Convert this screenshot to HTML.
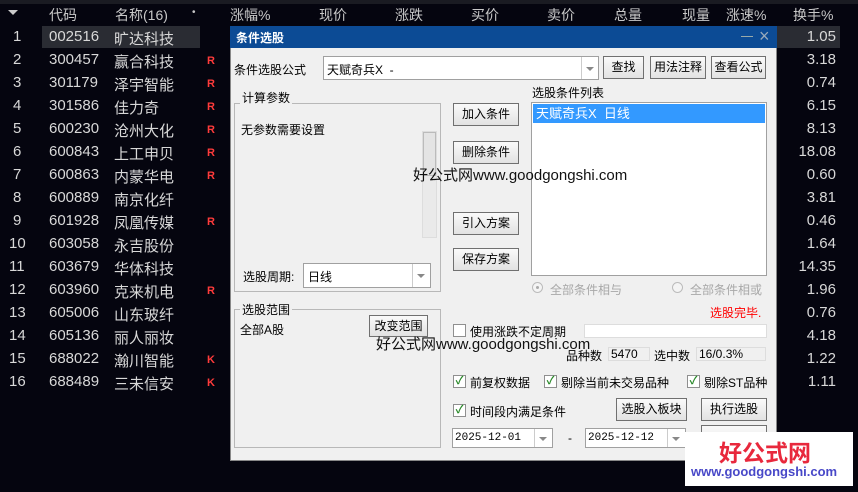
<!DOCTYPE html><html><head><meta charset="utf-8"><style>
*{margin:0;padding:0;box-sizing:border-box}
body{width:858px;height:492px;background:#05050f;position:relative;overflow:hidden;font-family:"Liberation Sans","Noto Sans CJK SC",sans-serif;}
.a{position:absolute;white-space:nowrap}
.h{color:#c8c8c8;font-size:14px;top:5px}
.r{color:#d8d8d8;font-size:15px}
.R{color:#ff3b3b;font-size:11px;font-weight:bold}
.d{font-size:12px;color:#000}
.btn{position:absolute;background:linear-gradient(#fafafa,#e2e2e2);border:1px solid #707070;font-size:12px;text-align:center;color:#000}
.box{position:absolute;background:#fff;border:1px solid #a0a0a0}
.cb{position:absolute;width:13px;height:13px;border:1px solid #8f8f8f;background:#fff;color:#2a8a2a;font-size:11px;line-height:11px;text-align:center;font-weight:bold}
.arr{position:absolute;width:0;height:0;border-left:4px solid transparent;border-right:4px solid transparent;border-top:4px solid #888}
</style></head><body>
<div class="a" style="left:0;top:0;width:858px;height:4px;background:#1a1b22"></div>
<div class="a" style="left:8px;top:10px;width:0;height:0;border-left:5px solid transparent;border-right:5px solid transparent;border-top:5px solid #ccc"></div>
<div class="a h" style="left:49px">代码</div>
<div class="a h" style="left:115px">名称(16)</div>
<div class="a h" style="left:192px;font-size:10px;top:7px">•</div>
<div class="a h" style="left:230px">涨幅%</div>
<div class="a h" style="left:319px">现价</div>
<div class="a h" style="left:395px">涨跌</div>
<div class="a h" style="left:471px">买价</div>
<div class="a h" style="left:547px">卖价</div>
<div class="a h" style="left:614px">总量</div>
<div class="a h" style="left:682px">现量</div>
<div class="a h" style="left:726px">涨速%</div>
<div class="a h" style="left:793px">换手%</div>
<div class="a" style="left:42px;top:26px;width:158px;height:22px;background:#2a2c33"></div>
<div class="a" style="left:776px;top:26px;width:64px;height:22px;background:#2a2c33"></div>
<div id="rows"></div>
<script>
var d=[["002516","旷达科技","","1.05"],["300457","赢合科技","R","3.18"],["301179","泽宇智能","R","0.74"],["301586","佳力奇","R","6.15"],["600230","沧州大化","R","8.13"],["600843","上工申贝","R","18.08"],["600863","内蒙华电","R","0.60"],["600889","南京化纤","","3.81"],["601928","凤凰传媒","R","0.46"],["603058","永吉股份","","1.64"],["603679","华体科技","","14.35"],["603960","克来机电","R","1.96"],["605006","山东玻纤","","0.76"],["605136","丽人丽妆","","4.18"],["688022","瀚川智能","K","1.22"],["688489","三未信安","K","1.11"]];
var h="";d.forEach(function(r,i){var t=28+i*23;h+='<div class="a r" style="left:'+(i<9?13:9)+'px;top:'+t+'px">'+(i+1)+'</div><div class="a r" style="left:49px;top:'+t+'px">'+r[0]+'</div><div class="a r" style="left:114px;top:'+t+'px">'+r[1]+'</div><div class="a R" style="left:207px;top:'+(t+4)+'px">'+r[2]+'</div><div class="a r" style="right:22px;top:'+t+'px">'+r[3]+'</div>';});
document.getElementById("rows").innerHTML=h;
</script>
<!-- dialog -->
<div class="a" style="left:230px;top:26px;width:547px;height:435px;background:#f0f0f0;border:1px solid #888"></div>
<div class="a" style="left:230px;top:26px;width:547px;height:22px;background:#0c4b95"></div>
<div class="a" style="left:236px;top:29px;color:#fff;font-size:12px;font-weight:bold">条件选股</div>
<div class="a" style="left:741px;top:36px;width:12px;height:1px;background:#9aa"></div>
<div class="a" style="left:759px;top:26px;color:#9ab;font-size:18px;line-height:20px">×</div>
<div class="a d" style="left:234px;top:61px">条件选股公式</div>
<div class="box" style="left:323px;top:56px;width:276px;height:24px"></div>
<div class="a d" style="left:327px;top:61px">天赋奇兵X&nbsp; -</div>
<div class="a" style="left:581px;top:57px;width:1px;height:22px;background:#ccc"></div><div class="arr" style="left:586px;top:67px"></div>
<div class="btn" style="left:603px;top:56px;width:41px;height:23px;line-height:21px">查找</div>
<div class="btn" style="left:650px;top:56px;width:56px;height:23px;line-height:21px">用法注释</div>
<div class="btn" style="left:711px;top:56px;width:55px;height:23px;line-height:21px">查看公式</div>
<div class="a" style="left:234px;top:103px;width:207px;height:189px;border:1px solid #b8b8b8"></div>
<div class="a d" style="left:240px;top:89px;background:#f0f0f0;padding:0 2px">计算参数</div>
<div class="a d" style="left:241px;top:121px">无参数需要设置</div>
<div class="a" style="left:422px;top:131px;width:15px;height:107px;background:#eaeaea;border:1px solid #ddd"></div>
<div class="a" style="left:423px;top:132px;width:13px;height:44px;background:#e4e4e4;border:1px solid #bbb"></div>
<div class="a d" style="left:243px;top:268px">选股周期:</div>
<div class="box" style="left:303px;top:263px;width:128px;height:25px"></div>
<div class="a d" style="left:308px;top:268px">日线</div>
<div class="a" style="left:412px;top:264px;width:1px;height:23px;background:#ccc"></div><div class="arr" style="left:417px;top:274px"></div>
<div class="a" style="left:234px;top:309px;width:207px;height:139px;border:1px solid #b8b8b8"></div>
<div class="a d" style="left:240px;top:301px;background:#f0f0f0;padding:0 2px">选股范围</div>
<div class="a d" style="left:240px;top:321px">全部A股</div>
<div class="btn" style="left:369px;top:315px;width:59px;height:22px;line-height:20px">改变范围</div>
<div class="btn" style="left:453px;top:103px;width:66px;height:23px;line-height:21px">加入条件</div>
<div class="btn" style="left:453px;top:141px;width:66px;height:23px;line-height:21px">删除条件</div>
<div class="btn" style="left:453px;top:212px;width:66px;height:23px;line-height:21px">引入方案</div>
<div class="btn" style="left:453px;top:248px;width:66px;height:23px;line-height:21px">保存方案</div>
<div class="a d" style="left:532px;top:84px">选股条件列表</div>
<div class="box" style="left:531px;top:102px;width:236px;height:174px"></div>
<div class="a" style="left:533px;top:104px;width:232px;height:19px;background:#3399ff;color:#fff;font-size:13px;padding-left:3px;line-height:19px">天赋奇兵X&nbsp; 日线</div>
<div class="a" style="left:532px;top:282px;width:11px;height:11px;border-radius:50%;border:1px solid #bbb;background:#f4f4f4"></div><div class="a" style="left:536px;top:286px;width:3px;height:3px;border-radius:50%;background:#aaa"></div>
<div class="a d" style="left:550px;top:281px;color:#a8a8a8">全部条件相与</div>
<div class="a" style="left:672px;top:282px;width:11px;height:11px;border-radius:50%;border:1px solid #bbb;background:#f4f4f4"></div>
<div class="a d" style="left:690px;top:281px;color:#a8a8a8">全部条件相或</div>
<div class="a d" style="left:710px;top:304px;color:#f00">选股完毕.</div>
<div class="cb" style="left:453px;top:324px"></div>
<div class="a d" style="left:470px;top:323px">使用涨跌不定周期</div>
<div class="a" style="left:584px;top:324px;width:183px;height:14px;background:#fff;border:1px solid #ddd"></div>
<div class="a d" style="left:566px;top:347px">品种数</div>
<div class="a" style="left:608px;top:347px;width:42px;height:14px;border:1px solid #ddd;font-size:12px;padding-left:2px;line-height:13px">5470</div>
<div class="a d" style="left:654px;top:347px">选中数</div>
<div class="a" style="left:696px;top:347px;width:70px;height:14px;border:1px solid #ddd;font-size:12px;padding-left:2px;line-height:13px">16/0.3%</div>
<div class="cb" style="left:453px;top:375px">✓</div><div class="a d" style="left:470px;top:374px">前复权数据</div>
<div class="cb" style="left:544px;top:375px">✓</div><div class="a d" style="left:561px;top:374px">剔除当前未交易品种</div>
<div class="cb" style="left:687px;top:375px">✓</div><div class="a d" style="left:704px;top:374px">剔除ST品种</div>
<div class="cb" style="left:453px;top:404px">✓</div><div class="a d" style="left:470px;top:403px">时间段内满足条件</div>
<div class="btn" style="left:616px;top:398px;width:71px;height:23px;line-height:21px">选股入板块</div>
<div class="btn" style="left:701px;top:398px;width:66px;height:23px;line-height:21px">执行选股</div>
<div class="btn" style="left:701px;top:425px;width:66px;height:23px"></div>
<div class="box" style="left:452px;top:428px;width:101px;height:20px;font-size:11px;font-family:'Liberation Mono',monospace;padding:3px 2px">2025-12-01</div>
<div class="a" style="left:534px;top:429px;width:1px;height:18px;background:#ccc"></div><div class="arr" style="left:539px;top:437px"></div>
<div class="a d" style="left:568px;top:431px">-</div>
<div class="box" style="left:585px;top:428px;width:101px;height:20px;font-size:11px;font-family:'Liberation Mono',monospace;padding:3px 2px">2025-12-12</div>
<div class="a" style="left:667px;top:429px;width:1px;height:18px;background:#ccc"></div><div class="arr" style="left:672px;top:437px"></div>
<div class="a" style="left:413px;top:164px;font-size:15px;color:#111">好公式网www.goodgongshi.com</div>
<div class="a" style="left:376px;top:333px;font-size:15px;color:#111">好公式网www.goodgongshi.com</div>
<div class="a" style="left:685px;top:432px;width:168px;height:54px;background:#fff"></div>
<div class="a" style="left:719px;top:434px;font-size:23px;font-weight:bold;color:#e8283c">好公式网</div>
<div class="a" style="left:691px;top:464px;font-size:13px;font-weight:bold;color:#4848c8">www.goodgongshi.com</div>
</body></html>
